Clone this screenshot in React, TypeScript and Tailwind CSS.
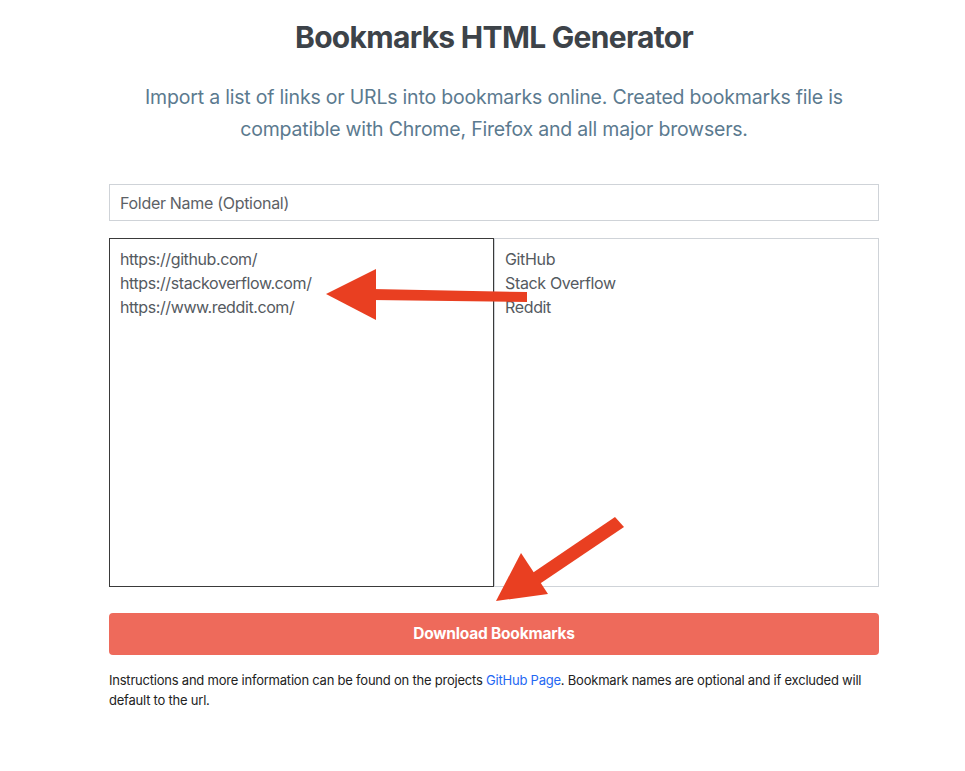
import React from 'react';

const URLS = 'https://github.com/\nhttps://stackoverflow.com/\nhttps://www.reddit.com/';
const NAMES = 'GitHub\nStack Overflow\nReddit';

const Arrows: React.FC = () => (
  <svg
    className="pointer-events-none absolute left-0 top-0"
    width="965"
    height="771"
    viewBox="0 0 965 771"
  >
    {/* left pointing arrow */}
    <path d="M372 289 L527 292 L527 302 L372 300 Z" fill="#e93f21" />
    <path d="M326 294 L376 269 L376 320 Z" fill="#e93f21" />
    {/* down-left arrow */}
    <path d="M615 517 L624 527 L538 585 L531 574 Z" fill="#e93f21" />
    <path d="M496 601 L521 553 L548 594 Z" fill="#e93f21" />
  </svg>
);

export default function App() {
  return (
    <div
      className="relative min-h-[771px] bg-white"
      style={{ fontFamily: 'Inter, "Liberation Sans", Arial, sans-serif' }}
    >
      <div className="ml-[109px] w-[770px] pt-[19px]">
        <h1 className="text-center text-[30px] font-bold leading-[36px] tracking-[-0.7px] text-[#3d4349]">
          Bookmarks HTML Generator
        </h1>
        <p className="mt-[26px] px-[30px] text-center text-[19.5px] leading-[32px] tracking-[-0.2px] text-[#5b7a8f]">
          Import a list of links or URLs into bookmarks online. Created bookmarks file is
          compatible with Chrome, Firefox and all major browsers.
        </p>

        <input
          type="text"
          placeholder="Folder Name (Optional)"
          className="mt-[39px] block h-[37px] w-full border border-[#cfd3d8] px-[10px] text-[16px] tracking-[-0.3px] text-[#555] outline-none placeholder:text-[#5c6166]"
        />

        <div className="mt-[17px] flex h-[349px]">
          <textarea
            defaultValue={URLS}
            className="h-full w-[385px] resize-none border border-[#3a3a3a] px-[10px] pt-[8px] text-[16px] leading-[24px] tracking-[-0.4px] text-[#555a5f] outline-none"
          />
          <textarea
            defaultValue={NAMES}
            className="h-full flex-1 resize-none border border-[#cfd3d8] px-[10px] pt-[8px] text-[16px] leading-[24px] tracking-[-0.35px] text-[#555a5f] outline-none"
          />
        </div>

        <button className="mt-[26px] block h-[42px] w-full rounded-[4px] bg-[#ee6a5b] text-[15.5px] font-bold tracking-[-0.2px] text-white">
          Download Bookmarks
        </button>

        <p className="mt-[15px] text-[13px] leading-[20px] tracking-[-0.22px] text-[#222]">
          Instructions and more information can be found on the projects{' '}
          <a href="#" className="text-[#2468f2]">
            GitHub Page
          </a>
          . Bookmark names are optional and if excluded will default to the url.
        </p>
      </div>
      <Arrows />
    </div>
  );
}
